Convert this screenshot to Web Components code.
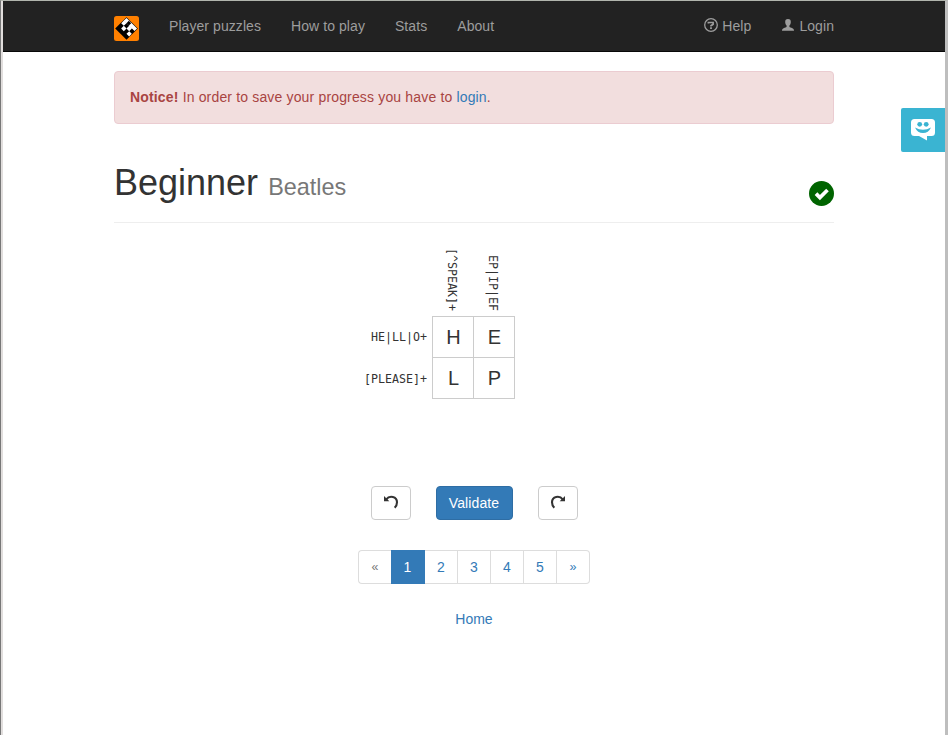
<!DOCTYPE html>
<html lang="en">
<head>
<meta charset="utf-8">
<title>Beginner - Beatles</title>
<style>
html,body{margin:0;height:100%}
body{font:14px/20px "Liberation Sans",Arial,sans-serif;color:#333;background:#fff;overflow:hidden}
</style>
</head>
<body>
<puzzle-page></puzzle-page>
<script>
const define = (name, css, html) => customElements.define(name, class extends HTMLElement {
  constructor() {
    super();
    const t = document.createElement('template');
    t.innerHTML = `<style>*{box-sizing:border-box}${css}</style>${html}`;
    this.attachShadow({mode: 'open'}).append(t.content.cloneNode(true));
  }
});

define('brand-logo', `:host{display:block;width:25px;height:25px}svg{display:block}`,
`<svg width="25" height="25" viewBox="0 0 25 25"><rect width="25" height="25" rx="2.5" fill="#ff8000"/>
<g transform="translate(12.5 12.5) rotate(45)"><rect x="-8" y="-8" width="16" height="16" fill="#000"/>
<path fill="#fff" d="M-7.500-7.500h15v3.700h-15zM-7.500-3.800h3.700v3.800h-3.700zM0-3.800h3.800v3.800h-3.800zM-3.800 0h3.800v3.800h-3.800zM3.800 0h3.700v3.800h-3.700z"/><path fill="#000" d="M-3.800-7h3.400v3.200h-3.400z"/></g></svg>`);

define('nav-link', `:host{display:block}a{display:flex;align-items:center;padding:15px;color:#9d9d9d;white-space:pre;letter-spacing:.07px}::slotted(svg){display:block;margin-right:4px;position:relative;top:-1px}`,
`<a><slot name="icon"></slot><slot></slot></a>`);

define('nav-bar', `:host{display:block;height:51px;background:#222;border-bottom:1px solid #080808}
.in{width:720px;margin:0 auto;display:flex}brand-logo{margin:15px 15px 0 0}.r{margin-left:auto;margin-right:-15px;display:flex}`,
`<div class="in"><brand-logo></brand-logo><nav-link>Player puzzles</nav-link><nav-link>How to play</nav-link><nav-link>Stats</nav-link><nav-link>About</nav-link>
<div class="r"><nav-link><svg slot="icon" width="14" height="14" viewBox="0 0 14 14" fill="none" stroke="#9d9d9d"><circle cx="7" cy="7" r="6.300" stroke-width="1.300"/><path d="M4.400 5.400V4.500H9.100V6.200L7 7.700V8.500" stroke-width="1.700"/><path d="M7 9.300V11" stroke-width="1.800"/></svg>Help</nav-link>
<nav-link><svg slot="icon" width="14" height="14" viewBox="0 0 14 14" fill="#9d9d9d"><path d="M7 1C4.900 1 4.100 2.200 4.200 4.200c.1 1.500.6 2.700 1.400 3.400v1.200c-.4.7-1.600.9-3 1.500C1.400 10.800 1 11.500 1 12.800h12c0-1.300-.4-2-1.600-2.500-1.400-.6-2.600-.8-3-1.500V7.600c.8-.7 1.300-1.900 1.400-3.400C9.900 2.200 9.100 1 7 1z"/></svg>Login</nav-link></div></div>`);

define('notice-box', `:host{display:block;height:53px;padding:15px;border:1px solid #ebccd1;border-radius:4px;background:#f2dede;color:#a94442;line-height:21px;letter-spacing:.16px}`,
`<slot></slot>`);

define('page-title', `:host{display:flex;justify-content:space-between;height:60px;border-bottom:1px solid #eee;margin-top:39px}
h1{margin:0;font-weight:400;font-size:36px;line-height:40px}small{font-size:23.4px;color:#777}svg{display:block;margin-top:18px}`,
`<h1><slot></slot> <small><slot name="sub"></slot></small></h1>
<svg width="25" height="25" viewBox="0 0 25 25"><circle cx="12.500" cy="12.500" r="12.500" fill="#006400"/><path d="M7 12.600l3.900 4L18.500 9" fill="none" stroke="#fff" stroke-width="3.700"/></svg>`);

define('regex-grid', `:host{display:grid;grid-template-columns:68px 42px 41px;grid-template-rows:70px 42px 41px;width:151px;margin:23px 0 0 250px}
.c,.r{font:11.63px/16px "DejaVu Sans Mono",monospace;white-space:nowrap}
.c{writing-mode:vertical-rl;display:flex;align-items:center;justify-content:flex-end;padding:0 2px 5px 0}
.c+.c{padding-right:3px}
.r{display:flex;align-items:center;justify-content:flex-end;padding-right:5px}
.x{display:flex;align-items:center;justify-content:center;border:1px solid #ccc;font-size:20px;padding-left:1px}
.e{border-left:0}.b{border-top:0}`,
`<span></span><div class="c">[^SPEAK]+</div><div class="c">EP|IP|EF</div>
<div class="r">HE|LL|O+</div><div class="x">H</div><div class="x e">E</div>
<div class="r">[PLEASE]+</div><div class="x b">L</div><div class="x b e">P</div>`);

define('action-button', `:host{display:block}button{display:flex;align-items:center;justify-content:center;width:40px;height:34px;padding:0;border:1px solid #ccc;border-radius:4px;background:#fff;color:#333;font:inherit;letter-spacing:.1px}
:host([primary]) button{width:77px;background:#337ab7;border-color:#2e6da4;color:#fff}::slotted(svg){position:relative;top:-1px}`,
`<button><slot></slot></button>`);

define('page-list', `:host{display:flex;justify-content:center;margin-top:30px}
a{width:33px;height:34px;border:1px solid #ddd;border-left:0;color:#337ab7;text-align:center;line-height:32px}
a:first-of-type{border:1px solid #ddd;border-right:0;border-radius:4px 0 0 4px;color:#777}
a.on{width:34px;background:#337ab7;border-color:#337ab7;color:#fff}a:last-child{border-radius:0 4px 4px 0}
a:first-of-type,a:last-child{font-size:12.500px}`,
`<a>«</a><a class="on">1</a><a>2</a><a>3</a><a>4</a><a>5</a><a>»</a>`);

define('chat-tab', `:host{position:absolute;right:0;top:107px;display:block;width:44px;height:44px;background:#3ab4d2;border-radius:2px 0 0 2px}svg{display:block}`,
`<svg width="44" height="44" viewBox="0 0 44 44"><path d="M13.500 11h17q3.500 0 3.500 3.500V24.500q0 3.500-3.500 3.500H26v4.500L18 28h-4.500Q10 28 10 24.500V14.500Q10 11 13.500 11z" fill="#fff"/><circle cx="18.700" cy="16.300" r="2.400" fill="#3ab4d2"/><circle cx="25.200" cy="16.300" r="2.400" fill="#3ab4d2"/><path d="M14 19.500q8 4.500 16 0-2.500 5.500-8 5.500T14 19.500z" fill="#3ab4d2"/></svg>`);

define('puzzle-page', `:host{display:block;height:100vh;box-sizing:border-box;border-top:1px solid #b1b5ad;border-left:1px solid #777;border-right:3px solid #bebebe;background:#fff;position:relative}
.view{position:relative;height:100%;border-left:2px solid #e1dedd}
main{width:720px;margin:19px auto 0}b{font-weight:700}a{color:#337ab7}.act{display:flex;justify-content:center;gap:25px;margin-top:87px}.home{text-align:center;margin-top:25px}`,
`<div class="view"><nav-bar></nav-bar><main>
<notice-box><b>Notice!</b> In order to save your progress you have to <a>login</a>.</notice-box>
<page-title>Beginner<span slot="sub">Beatles</span></page-title>
<regex-grid></regex-grid>
<div class="act"><action-button><svg width="16" height="14" viewBox="0 0 16 14"><path d="M3.300 4.300C6.500 0 14 1.300 14 7.300q0 3.200-2.300 5.400" fill="none" stroke="#333" stroke-width="2.100"/><path d="M1 1V6.300H6.300z" fill="#333"/></svg></action-button>
<action-button primary>Validate</action-button>
<action-button><svg width="16" height="14" viewBox="0 0 16 14"><path d="M12.700 4.300C9.500 0 2 1.300 2 7.300q0 3.200 2.300 5.400" fill="none" stroke="#333" stroke-width="2.100"/><path d="M15 1V6.300H9.700z" fill="#333"/></svg></action-button></div>
<page-list></page-list><div class="home"><a>Home</a></div></main><chat-tab></chat-tab></div>`);
</script>
</body>
</html>
